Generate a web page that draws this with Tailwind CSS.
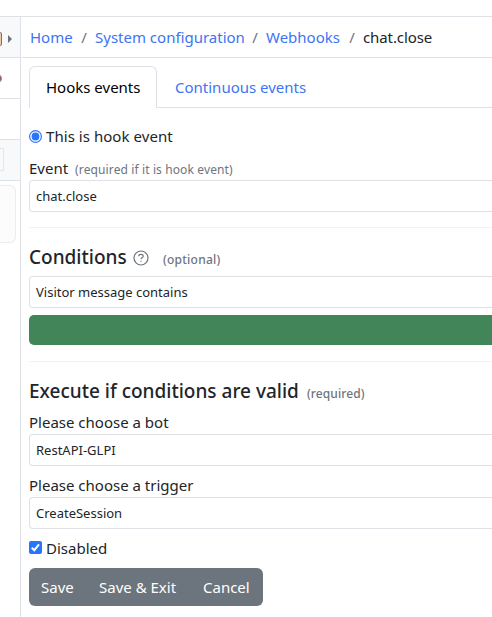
<!DOCTYPE html>
<html lang="en">
<head>
<meta charset="utf-8">
<title>Webhooks</title>
<script src="https://cdn.jsdelivr.net/npm/@tailwindcss/browser@4"></script>
</head>
<body class="bg-white text-[#212529] font-['Noto_Sans','Open_Sans',sans-serif] text-[15px] leading-[24px] whitespace-nowrap overflow-hidden">
<div class="h-[617px] w-[492px] overflow-hidden flex flex-col">
  <div class="h-[17px] shrink-0 border-b border-[#dee2e6]"></div>
  <div class="flex flex-1 min-h-0">
    <aside class="w-[21px] shrink-0 border-r border-[#dee2e6] overflow-hidden">
      <div class="h-[41px] bg-[#f8f9fa] border-b border-[#dee2e6]">
        <svg class="block" width="20" height="40" viewBox="0 0 20 40"><path d="M-4 15.500H0.500Q1.500 15.500 1.500 17V27Q1.500 28.500 0.500 28.500H-4Z" fill="#eccba6" stroke="#6c757d"/><path d="M8 18L12 22L8 26Z" fill="#6c757d"/></svg>
      </div>
      <div class="h-[41px] border-b border-[#dee2e6]">
        <svg class="block" width="20" height="40" viewBox="0 0 20 40"><circle cx="-2" cy="20.500" r="3.500" fill="#b0524f" stroke="#6f8ea8"/></svg>
      </div>
      <div class="h-[41px] border-b border-[#dee2e6]"></div>
      <div class="h-[41px] bg-[#f8f9fa] border-b border-[#dee2e6] pt-[8px]">
        <div class="w-[4px] h-[23px] border border-l-0 border-[#dbe9f5]"></div>
      </div>
      <div class="mt-[4px] w-[16px] h-[58px] rounded-r-[6px] border border-l-0 border-[#ececed] bg-[#fcfcfc]"></div>
    </aside>
    <main class="flex-1 min-w-0 overflow-hidden">
      <nav class="h-[41px] ml-px border-b border-[#dee2e6] pl-[8px] flex items-center text-[#3d74f5]">
        <span class="w-[43px]">Home</span><span class="w-[22px] text-center text-[#6c757d]">/</span><span class="w-[149px]">System configuration</span><span class="w-[22px] text-center text-[#6c757d]">/</span><span class="w-[75px]">Webhooks</span><span class="w-[22px] text-center text-[#6c757d]">/</span><span class="tracking-[-0.1px] text-[#212529]">chat.close</span>
      </nav>
      <div class="pl-[8px]">
        <div class="mt-[8px] h-[42px] flex">
          <div class="w-[128px] h-[42px] border border-b-0 border-[#dee2e6] rounded-t-[6px] pl-[16px] pt-[8px] text-black">Hooks events</div>
          <div class="flex-1 border-b border-[#dee2e6] pl-[18px] pt-[9px] text-[#3d74f5]">Continuous events</div>
        </div>
        <div class="mt-[16px] h-[24px] flex items-center">
          <svg class="mr-[4px]" width="13" height="13" viewBox="0 0 13 13"><circle cx="6.500" cy="6.500" r="5.900" fill="white" stroke="#2f76f6" stroke-width="1.200"/><circle cx="6.500" cy="6.500" r="3.900" fill="#2675ff"/></svg><span class="tracking-[0.05px]">This is hook event</span>
        </div>
        <div class="mt-[8px] h-[24px] flex items-center"><span>Event</span><span class="ml-[7px] mt-[3px] text-[12px] tracking-[0.12px] text-[#6c757d]">(required if it is hook event)</span></div>
        <div class="h-[32px] border border-r-0 border-[#dee2e6] rounded-l-[4px] pl-[6px] flex items-center text-[13px]">chat.close</div>
        <div class="mt-[15px] h-px bg-[#f2f3f3]"></div>
        <div class="mt-[13px] mb-[2px] h-[33px] flex items-center">
          <h2 class="text-[19px] -mt-px font-medium w-[98px]">Conditions</h2>
          <svg class="ml-[6px] mt-px" width="16" height="16" viewBox="0 0 16 16" fill="none" stroke="#6c757d" stroke-width="1.200"><circle cx="8" cy="8" r="7"/><path d="M5.800 6.200Q5.800 4.300 8 4.300T10.200 6.200C10.200 7.700 8 7.800 8 9.300"/><path d="M8 10.700V11.800"/></svg>
          <span class="ml-[14px] mt-[5px] text-[12px] tracking-[0.25px] font-medium text-[#6c757d]">(optional)</span>
        </div>
        <div class="h-[32px] border border-r-0 border-[#dee2e6] rounded-l-[4px] pl-[6px] flex items-center text-[13px]">Visitor message contains</div>
        <div class="mt-[7px] h-[30px] bg-[#418558] rounded-l-[5px]"></div>
        <div class="mt-[16px] h-px bg-[#f2f3f3]"></div>
        <div class="mt-[14px] h-[29px] flex items-center">
          <h2 class="text-[19px] font-medium w-[270px]">Execute if conditions are valid</h2>
          <span class="ml-[8px] mt-[6px] text-[12px] tracking-[0.1px] font-medium text-[#6c757d]">(required)</span>
        </div>
        <div class="mt-[5px] h-[24px]">Please choose a bot</div>
        <div class="h-[32px] border border-r-0 border-[#dee2e6] rounded-l-[4px] pl-[6px] flex items-center text-[13px]">RestAPI-GLPI</div>
        <div class="mt-[7px] h-[24px]">Please choose a trigger</div>
        <div class="h-[32px] border border-r-0 border-[#dee2e6] rounded-l-[4px] pl-[6px] flex items-center text-[13px]">CreateSession</div>
        <div class="mt-[7px] h-[24px] flex items-center">
          <svg class="mr-[4px] -mt-[2px]" width="13" height="13" viewBox="0 0 13 13"><rect width="13" height="13" rx="2" fill="#2675ff"/><path d="M2.700 6.800L5.300 9.200L10 3.400" fill="none" stroke="white" stroke-width="2"/></svg><span>Disabled</span>
        </div>
        <div class="mt-[8px] h-[38px] w-[234px] rounded-[6px] bg-[#6c757d] text-white flex items-center pl-[12px]">
          <span class="w-[58px]">Save</span><span class="w-[104px]">Save &amp; Exit</span><span>Cancel</span>
        </div>
      </div>
    </main>
  </div>
</div>
</body>
</html>
